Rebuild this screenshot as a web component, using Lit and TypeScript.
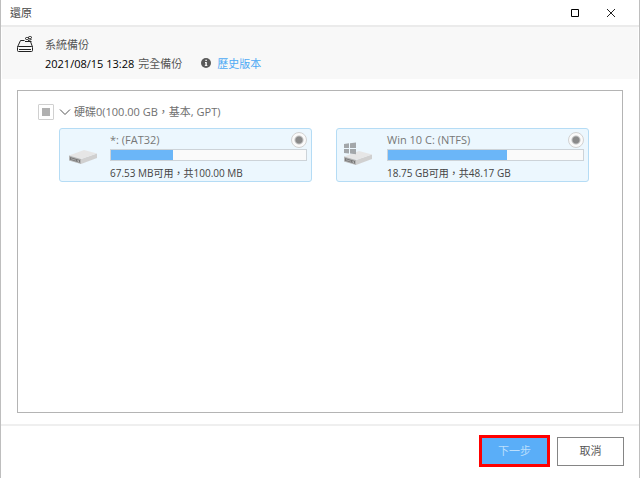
import { LitElement, html, css, svg } from "lit";
import { customElement, property, state } from "lit/decorators.js";

interface Volume {
  name: string;
  usage: string;
  used: number;
  system: boolean;
}

const volumes: Volume[] = [
  { name: "*: (FAT32)", usage: "67.53 MB可用，共100.00 MB", used: 32, system: false },
  { name: "Win 10 C: (NTFS)", usage: "18.75 GB可用，共48.17 GB", used: 61, system: true },
];

const windowsLogo = svg`
  <g fill="#a3a7aa">
    <path d="M0 4 5 3.300V8H0z" /><path d="M6 3.200 12 2.500V8H6z" />
    <path d="M0 9h5v4.500L0 13z" /><path d="M6 9h6v5.200l-6-.6z" />
  </g>`;

@customElement("volume-card")
export class VolumeCard extends LitElement {
  @property({ attribute: false }) volume!: Volume;

  static styles = css`
    :host {
      display: block;
    }
    .card {
      box-sizing: border-box;
      height: 54px;
      display: grid;
      grid-template-columns: 50px 1fr;
      padding: 3px 4px 0 0;
      border: 1px solid #b5dcf5;
      border-radius: 3px;
      background: #ecf7fe;
    }
    .drive {
      display: block;
      width: 32px;
      height: 28px;
      margin: 8px 0 0 7px;
    }
    .top {
      display: flex;
      align-items: center;
      justify-content: space-between;
      height: 16px;
      color: #777;
      font-size: 11px;
    }
    .pick {
      appearance: none;
      box-sizing: border-box;
      width: 16px;
      height: 16px;
      margin: 0;
      border: 1px solid #d2d2d2;
      border-radius: 50%;
      background: radial-gradient(circle, #8a8a8a 0 3px, #fafafa 5px);
    }
    .bar {
      box-sizing: border-box;
      height: 12px;
      margin-top: 1px;
      border: 1px solid #cdd3d8;
      background: #fafafa;
    }
    .fill {
      height: 100%;
      background: #6bb6f8;
    }
    .usage {
      margin-top: 4px;
      color: #444;
      font-size: 10px;
      line-height: 16px;
      white-space: nowrap;
    }
  `;

  render() {
    const v = this.volume;
    return html`
      <div class="card">
        <svg class="drive" viewBox="0 0 32 28" aria-hidden="true">
          <g transform=${v.system ? "translate(-2 1)" : "translate(0 0)"}>
            <path d="M14 19 30 13.500V18L14 24z" fill="#d0d0d0" />
            <path d="M2 15.500 17 10 30 13.500 14 19z" fill="#e6e6e6" />
            <path d="M2 15.500 14 19v5L2 20.500z" fill="#b4b4b4" />
            <path d="M3 17l10 2.900v2.800L3 19.800z" fill="#777" />
            <path d="M4 18.300l5 1.500v1l-5-1.500z" fill="#aaa" />
            <path d="M10.500 20.200l1.500.5v1l-1.500-.5z" fill="#ddd" />
          </g>
          ${v.system ? windowsLogo : ""}
        </svg>
        <div>
          <div class="top">
            <label for="pick">${v.name}</label>
            <input class="pick" id="pick" type="radio" checked />
          </div>
          <div class="bar"><div class="fill" style="width:${v.used}%"></div></div>
          <div class="usage">${v.usage}</div>
        </div>
      </div>
    `;
  }
}

@customElement("app-root")
export class AppRoot extends LitElement {
  @state() private open = true;

  static styles = css`
    :host {
      display: flex;
      flex-direction: column;
      box-sizing: border-box;
      min-height: 100vh;
      border: solid #bebebe;
      border-width: 0 1px;
      background: #fff;
      color: #444;
      font: 11px/18px "Open Sans", "Noto Sans CJK TC", sans-serif;
    }
    button {
      font: inherit;
      padding: 0;
    }
    .titlebar {
      display: flex;
      align-items: center;
      box-sizing: border-box;
      flex: 0 0 27px;
      padding: 0 22px 0 9px;
      border-bottom: 2px solid #ebebeb;
    }
    .title {
      flex: 1;
      margin: 0;
      font-size: 11px;
      font-weight: 400;
    }
    .tool {
      display: grid;
      place-items: center;
      width: 12px;
      height: 16px;
      margin-left: 24px;
      border: 0;
      background: none;
    }
    .summary {
      display: flex;
      gap: 11px;
      margin: 0 1px;
      padding: 8px 14px 6px;
      background: #f8f8f8;
    }
    .backup {
      display: block;
      width: 18px;
      height: 18px;
    }
    .line {
      display: flex;
      align-items: center;
      height: 19px;
      color: #555;
    }
    .date {
      color: #000;
      margin-right: 4px;
    }
    .info {
      width: 10px;
      height: 10px;
      margin: 0 6px 2px 19px;
    }
    .link {
      color: #4eaaf5;
      text-decoration: none;
    }
    .panel {
      flex: 1;
      margin: 11px 16px;
      padding: 12px 33px 13px 20px;
      border: 1px solid #b4b4b4;
    }
    .disk {
      display: flex;
      align-items: center;
      height: 18px;
      color: #707070;
    }
    .check {
      appearance: none;
      box-sizing: border-box;
      width: 16px;
      height: 16px;
      margin: 0 5px 0 0;
      border: 1px solid #d0d0d0;
      border-radius: 1px;
      background: linear-gradient(#b0b0b0, #b0b0b0) center / 8px 8px no-repeat #fff;
    }
    .toggle {
      display: grid;
      place-items: center;
      width: 12px;
      height: 16px;
      margin-right: 3px;
      border: 0;
      background: none;
    }
    .volumes {
      display: grid;
      grid-template-columns: 1fr 1fr;
      gap: 24px;
      margin: 7px 0 0 21px;
    }
    .footer {
      display: flex;
      align-items: center;
      justify-content: flex-end;
      gap: 7px;
      padding: 9px 15px 11px;
      border-top: 2px solid #efefef;
    }
    .next {
      width: 71px;
      height: 32px;
      border: 3px solid #f00;
      background: #5aaef8;
      color: #bcdffc;
    }
    .cancel {
      width: 67px;
      height: 29px;
      border: 1px solid #858585;
      background: #fff;
      color: #555;
    }
  `;

  render() {
    return html`
      <header class="titlebar">
        <h1 class="title">還原</h1>
        <button class="tool" aria-label="最大化">
          <svg width="10" height="10" viewBox="0 0 10 10">
            <path d="M1.500 1.500h7v7h-7z" fill="none" stroke="#000" />
          </svg>
        </button>
        <button class="tool" aria-label="關閉">
          <svg width="10" height="10" viewBox="0 0 10 10">
            <path d="M1 1l8 8M9 1L1 9" fill="none" stroke="#222" />
          </svg>
        </button>
      </header>
      <section class="summary">
        <svg class="backup" viewBox="0 0 18 18" fill="none" stroke="#222" aria-hidden="true">
          <path d="M8.500 5.500H4.500L1.500 12M14.500 6.500L16.500 12" />
          <rect x="1.500" y="11.500" width="15" height="5" rx="1" />
          <path d="M3 14.500h12" />
          <rect x="9.500" y="2.500" width="3" height="2" rx="1" />
          <rect x="12.500" y="1.500" width="3" height="2" rx="1" />
          <path d="M9 6.500h6.500M12 5.500l3.500-1" />
        </svg>
        <div>
          <div class="line">系統備份</div>
          <div class="line">
            <span class="date">2021/08/15 13:28</span><span>完全備份</span>
            <svg class="info" viewBox="0 0 10 10" aria-hidden="true">
              <circle cx="5" cy="5" r="5" fill="#5a5a5a" />
              <path d="M4.400 1.800h1.400v1.300H4.400zM4 4h1.800v3.200h.6v.9H3.800v-.9h.6V4.900H4z" fill="#fff" />
            </svg>
            <a class="link" href="#versions">歷史版本</a>
          </div>
        </div>
      </section>
      <main class="panel">
        <div class="disk">
          <input class="check" id="disk" type="checkbox" .indeterminate=${true} />
          <button class="toggle" aria-label="展開" aria-expanded=${this.open} @click=${() => (this.open = !this.open)}>
            <svg width="12" height="8" viewBox="0 0 12 8">
              <path d="M1 1.500l5 5 5-5" fill="none" stroke="#555" />
            </svg>
          </button>
          <label for="disk">硬碟0(100.00 GB，基本, GPT)</label>
        </div>
        ${this.open
          ? html`<div class="volumes">
              ${volumes.map((v) => html`<volume-card .volume=${v}></volume-card>`)}
            </div>`
          : ""}
      </main>
      <footer class="footer">
        <button class="next">下一步</button>
        <button class="cancel">取消</button>
      </footer>
    `;
  }
}
